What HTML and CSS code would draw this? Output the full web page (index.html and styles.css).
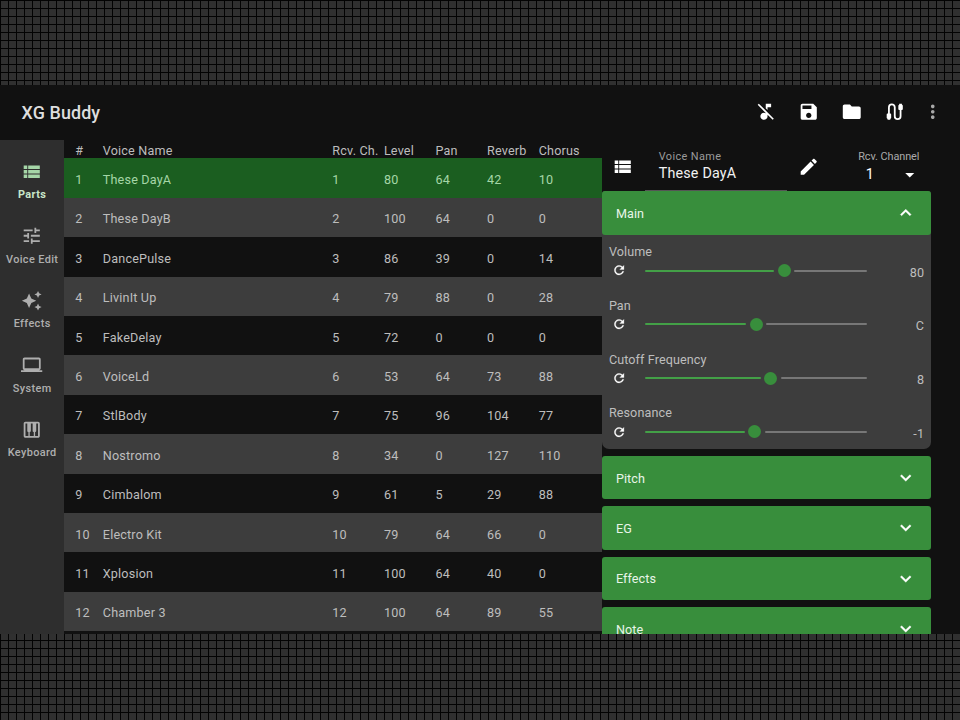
FILE: index.html
```
<!DOCTYPE html>
<html lang="en">
<head>
<meta charset="utf-8">
<title>XG Buddy</title>
<link rel="stylesheet" href="styles.css">
</head>
<body>
<svg class="defs" aria-hidden="true">
  <symbol id="list" viewBox="0 0 24 24"><path d="M3 14h4v-4H3v4zm0 5h4v-4H3v4zM3 9h4V5H3v4zm5 5h13v-4H8v4zm0 5h13v-4H8v4zM8 5v4h13V5H8z"/></symbol>
  <symbol id="tune" viewBox="0 0 24 24"><path d="M3 17v2h6v-2H3zM3 5v2h10V5H3zm10 16v-2h8v-2h-8v-2h-2v6h2zM7 9v2H3v2h4v2h2V9H7zm14 4v-2H11v2h10zm-6-4h2V7h4V5h-4V3h-2v6z"/></symbol>
  <symbol id="sparkle" viewBox="0 0 24 24"><path d="M19 9l1.250-2.750L23 5l-2.750-1.250L19 1l-1.250 2.750L15 5l2.750 1.250L19 9zm-7.500.5L9 4 6.500 9.500 1 12l5.500 2.500L9 20l2.500-5.500L17 12l-5.500-2.500zM19 15l-1.250 2.750L15 19l2.750 1.250L19 23l1.250-2.750L23 19l-2.750-1.250L19 15z"/></symbol>
  <symbol id="laptop" viewBox="0 0 24 24"><path d="M20 18c1.100 0 2-.9 2-2V6c0-1.100-.9-2-2-2H4c-1.100 0-2 .9-2 2v10c0 1.100.9 2 2 2H0v2h24v-2h-4zM4 6h16v10H4V6z"/></symbol>
  <symbol id="piano" viewBox="0 0 24 24"><path d="M19 3H5c-1.100 0-2 .9-2 2v14c0 1.100.9 2 2 2h14c1.100 0 2-.9 2-2V5c0-1.100-.9-2-2-2zm-5 11.500h.25V19h-4.500v-4.500H10c.55 0 1-.45 1-1V5h2v8.500c0 .55.45 1 1 1zM5 5h2v8.500c0 .55.45 1 1 1h.25V19H5V5zm14 14h-3.250v-4.500H16c.55 0 1-.45 1-1V5h2v14z"/></symbol>
  <symbol id="muted" viewBox="0 0 24 24"><path d="M4.270 3L3 4.270l9 9v.28c-.59-.34-1.270-.55-2-.55-2.210 0-4 1.790-4 4s1.790 4 4 4 4-1.790 4-4v-1.730L19.730 21 21 19.730 4.270 3zM14 7h4V3h-6v5.180l2 2V7z"/></symbol>
  <symbol id="save" viewBox="0 0 24 24"><path d="M17 3H5c-1.110 0-2 .9-2 2v14c0 1.100.89 2 2 2h14c1.100 0 2-.9 2-2V7l-4-4zm-5 16c-1.660 0-3-1.340-3-3s1.340-3 3-3 3 1.340 3 3-1.340 3-3 3zm3-10H5V5h10v4z"/></symbol>
  <symbol id="folder" viewBox="0 0 24 24"><path d="M10 4H4c-1.100 0-1.990.9-1.990 2L2 18c0 1.100.9 2 2 2h16c1.100 0 2-.9 2-2V8c0-1.100-.9-2-2-2h-8l-2-2z"/></symbol>
  <symbol id="cable" viewBox="0 0 24 24"><path d="M5.500 16V7a3.250 3.250 0 0 1 6.500 0v10a3.250 3.250 0 0 0 6.500 0V8" fill="none" stroke="currentColor" stroke-width="2"/><path d="M4 21v-1l-1-1v-4a1 1 0 0 1 1-1h3a1 1 0 0 1 1 1v4l-1 1v1zM17 3v1l-1 1v4a1 1 0 0 0 1 1h3a1 1 0 0 0 1-1V5l-1-1V3z"/></symbol>
  <symbol id="more" viewBox="0 0 24 24"><path d="M12 8c1.100 0 2-.9 2-2s-.9-2-2-2-2 .9-2 2 .9 2 2 2zm0 2c-1.100 0-2 .9-2 2s.9 2 2 2 2-.9 2-2-.9-2-2-2zm0 6c-1.100 0-2 .9-2 2s.9 2 2 2 2-.9 2-2-.9-2-2-2z"/></symbol>
  <symbol id="edit" viewBox="0 0 24 24"><path d="M3 17.250V21h3.750L17.810 9.940l-3.750-3.750L3 17.250zM20.710 7.040c.39-.39.39-1.020 0-1.410l-2.340-2.340c-.39-.39-1.020-.39-1.410 0l-1.830 1.830 3.750 3.750 1.830-1.830z"/></symbol>
  <symbol id="reset" viewBox="0 0 24 24"><path d="M17.650 6.350C16.200 4.900 14.210 4 12 4c-4.420 0-7.990 3.580-7.990 8s3.570 8 7.990 8c3.730 0 6.840-2.550 7.730-6h-2.080c-.82 2.330-3.040 4-5.650 4-3.310 0-6-2.690-6-6s2.690-6 6-6c1.660 0 3.140.69 4.220 1.780L13 11h7V4l-2.350 2.350z"/></symbol>
  <symbol id="down" viewBox="0 0 24 24"><path d="M7.410 8.590L12 13.170l4.590-4.580L18 10l-6 6-6-6z"/></symbol>
  <symbol id="up" viewBox="0 0 24 24"><path d="M7.410 15.410L12 10.830l4.590 4.580L18 14l-6-6-6 6z"/></symbol>
  <symbol id="drop" viewBox="0 0 24 24"><path d="M7 10l5 5 5-5z"/></symbol>
</svg>
<div class="app">
  <header class="bar">
    <h1>XG Buddy</h1>
    <nav class="actions">
      <svg><use href="#muted"/></svg>
      <svg><use href="#save"/></svg>
      <svg><use href="#folder"/></svg>
      <svg><use href="#cable"/></svg>
      <svg class="more"><use href="#more"/></svg>
    </nav>
  </header>
  <div class="body">
    <aside class="rail">
      <a class="item active"><svg><use href="#list"/></svg><span>Parts</span></a>
      <a class="item"><svg><use href="#tune"/></svg><span>Voice Edit</span></a>
      <a class="item"><svg><use href="#sparkle"/></svg><span>Effects</span></a>
      <a class="item"><svg><use href="#laptop"/></svg><span>System</span></a>
      <a class="item"><svg><use href="#piano"/></svg><span>Keyboard</span></a>
    </aside>
    <main class="parts">
      <div class="row head"><span>#</span><span>Voice Name</span><span>Rcv. Ch.</span><span>Level</span><span>Pan</span><span>Reverb</span><span>Chorus</span></div>
      <div class="row selected"><span>1</span><span>These DayA</span><span>1</span><span>80</span><span>64</span><span>42</span><span>10</span></div>
      <div class="row alt"><span>2</span><span>These DayB</span><span>2</span><span>100</span><span>64</span><span>0</span><span>0</span></div>
      <div class="row"><span>3</span><span>DancePulse</span><span>3</span><span>86</span><span>39</span><span>0</span><span>14</span></div>
      <div class="row alt"><span>4</span><span>LivinIt Up</span><span>4</span><span>79</span><span>88</span><span>0</span><span>28</span></div>
      <div class="row"><span>5</span><span>FakeDelay</span><span>5</span><span>72</span><span>0</span><span>0</span><span>0</span></div>
      <div class="row alt"><span>6</span><span>VoiceLd</span><span>6</span><span>53</span><span>64</span><span>73</span><span>88</span></div>
      <div class="row"><span>7</span><span>StlBody</span><span>7</span><span>75</span><span>96</span><span>104</span><span>77</span></div>
      <div class="row alt"><span>8</span><span>Nostromo</span><span>8</span><span>34</span><span>0</span><span>127</span><span>110</span></div>
      <div class="row"><span>9</span><span>Cimbalom</span><span>9</span><span>61</span><span>5</span><span>29</span><span>88</span></div>
      <div class="row alt"><span>10</span><span>Electro Kit</span><span>10</span><span>79</span><span>64</span><span>66</span><span>0</span></div>
      <div class="row"><span>11</span><span>Xplosion</span><span>11</span><span>100</span><span>64</span><span>40</span><span>0</span></div>
      <div class="row alt"><span>12</span><span>Chamber 3</span><span>12</span><span>100</span><span>64</span><span>89</span><span>55</span></div>
    </main>
    <section class="editor">
      <div class="voice">
        <svg class="pick"><use href="#list"/></svg>
        <div class="field"><small>Voice Name</small><b>These DayA</b></div>
        <svg class="pen"><use href="#edit"/></svg>
        <div class="channel"><small>Rcv. Channel</small><div class="select"><b>1</b><svg><use href="#drop"/></svg></div></div>
      </div>
      <div class="group open">
        <div class="title"><span>Main</span><svg><use href="#up"/></svg></div>
        <div class="param"><label>Volume</label><div class="control"><svg><use href="#reset"/></svg><div class="slider" style="--v:62.8%"><i></i><em></em><u></u></div><output>80</output></div></div>
        <div class="param"><label>Pan</label><div class="control"><svg><use href="#reset"/></svg><div class="slider" style="--v:50.2%"><i></i><em></em><u></u></div><output>C</output></div></div>
        <div class="param"><label>Cutoff Frequency</label><div class="control"><svg><use href="#reset"/></svg><div class="slider" style="--v:56.7%"><i></i><em></em><u></u></div><output>8</output></div></div>
        <div class="param"><label>Resonance</label><div class="control"><svg><use href="#reset"/></svg><div class="slider" style="--v:49.6%"><i></i><em></em><u></u></div><output>-1</output></div></div>
      </div>
      <div class="title"><span>Pitch</span><svg><use href="#down"/></svg></div>
      <div class="title"><span>EG</span><svg><use href="#down"/></svg></div>
      <div class="title"><span>Effects</span><svg><use href="#down"/></svg></div>
      <div class="title"><span>Note</span><svg><use href="#down"/></svg></div>
    </section>
  </div>
</div>
</body>
</html>
```
FILE: styles.css
```
* { box-sizing: border-box; }
body {
  margin: 0;
  height: 720px;
  padding-top: 85px;
  overflow: hidden;
  background-color: #303030;
  background-image:
    linear-gradient(90deg, #030303 1px, transparent 1px),
    linear-gradient(#030303 1px, transparent 1px);
  background-size: 8px 8px;
  font: 400 12.6px/16px Roboto, sans-serif;
  letter-spacing: .18px;
  color: #bdbdbd;
}
svg { display: block; width: 21.5px; height: 21.5px; fill: currentColor; flex: none; }
.defs { position: absolute; width: 0; height: 0; }
.app { height: 549px; display: flex; flex-direction: column; background: #111; overflow: hidden; }
.bar {
  height: 55px;
  flex: none;
  display: flex;
  align-items: center;
  justify-content: space-between;
  padding: 1px 16.500px 0 21.500px;
}
h1 { margin: 0; font-size: 17.900px; line-height: 24px; font-weight: 500; letter-spacing: .1px; color: #dedede; }
.actions { display: flex; gap: 21.500px; color: #fff; padding-bottom: 2px; }
.actions .more { color: #a8a8a8; margin-left: -5px; }
.body { flex: 1; min-height: 0; display: flex; }

.rail { width: 64.300px; flex: none; background: #2e2e2e; padding-top: 20.500px; color: #aeaeae; }
.item { height: 64.500px; display: flex; flex-direction: column; align-items: center; gap: 6px; }
.item svg { margin-left: -.5px; }
.item span { font-size: 10.900px; line-height: 14px; font-weight: 500; letter-spacing: .38px; white-space: nowrap; }
.item.active { color: #a5d6a7; }
.item.active span { color: #c8e6c9; font-weight: 700; }

.parts { width: 537.400px; flex: none; overflow: hidden; }
.row {
  height: 39.420px;
  display: grid;
  grid-template-columns: 27.500px 229.500px repeat(4, 51.600px) 1fr;
  align-items: center;
  padding: 4px 0 0 11px;
  white-space: nowrap;
}
.row.head { height: 18.300px; padding-top: 3px; }
.row.alt { background: #3d3d3d; }
.row.selected { background: #1b5e20; color: #a5d6a7; }

.editor { width: 329.500px; flex: none; display: flex; flex-direction: column; gap: 7px; }
.voice { height: 51.300px; flex: none; margin-bottom: -7px; display: flex; }
.pick { margin: 16px 0 0 10.500px; color: #fff; }
.field { width: 142px; margin-left: 11px; padding: 9.500px 0 0 14px; border-bottom: 1px solid #555; }
small { display: block; font-size: 10.900px; line-height: 13px; letter-spacing: .4px; color: #9b9b9b; white-space: nowrap; }
.field b { display: block; font-weight: 400; font-size: 14.300px; line-height: 20px; letter-spacing: .2px; color: #f2f2f2; }
.pen { margin: 15.500px 0 0 11px; color: #fff; }
.channel { margin-left: 39px; padding-top: 9.500px; }
.channel small { letter-spacing: -.08px; color: #aaa; }
.select { display: flex; align-items: center; justify-content: space-between; padding: 1px 0 0 7.500px; width: 62.500px; color: #fff; }
.select b { font-weight: 400; font-size: 14.300px; }

.title {
  height: 43.300px;
  flex: none;
  display: flex;
  align-items: center;
  justify-content: space-between;
  padding: 2px 14.500px 0 14.200px;
  border-radius: 3px;
  background: #388e3c;
  color: #e8f5e9;
  letter-spacing: .1px;
}
.title svg { color: #fff; margin-top: -2px; stroke: currentColor; stroke-width: .4px; }
.group { height: 257.800px; flex: none; background: #3d3d3d; border-radius: 3px 3px 7px 7px; }
.param { height: 53.800px; padding: 9.500px 7px 0 7.200px; }
.param label { display: block; letter-spacing: .1px; }
.control { display: flex; align-items: center; height: 22px; }
.control svg { width: 14.300px; height: 14.300px; color: #fff; margin: -1px 0 0 3px; stroke: currentColor; stroke-width: .5px; }
.slider { position: relative; width: 222px; height: 13px; margin: -1px 0 0 18.500px; display: flex; align-items: center; }
.slider i { width: calc(var(--v) - 10px); height: 2px; background: #43a047; border-radius: 1px; }
.slider em { width: 13px; height: 13px; margin: 0 3.500px; border-radius: 50%; background: #388e3c; }
.slider u { flex: 1; height: 2px; background: #777; border-radius: 1px; }
output { margin-left: auto; padding-top: 3px; }
```
